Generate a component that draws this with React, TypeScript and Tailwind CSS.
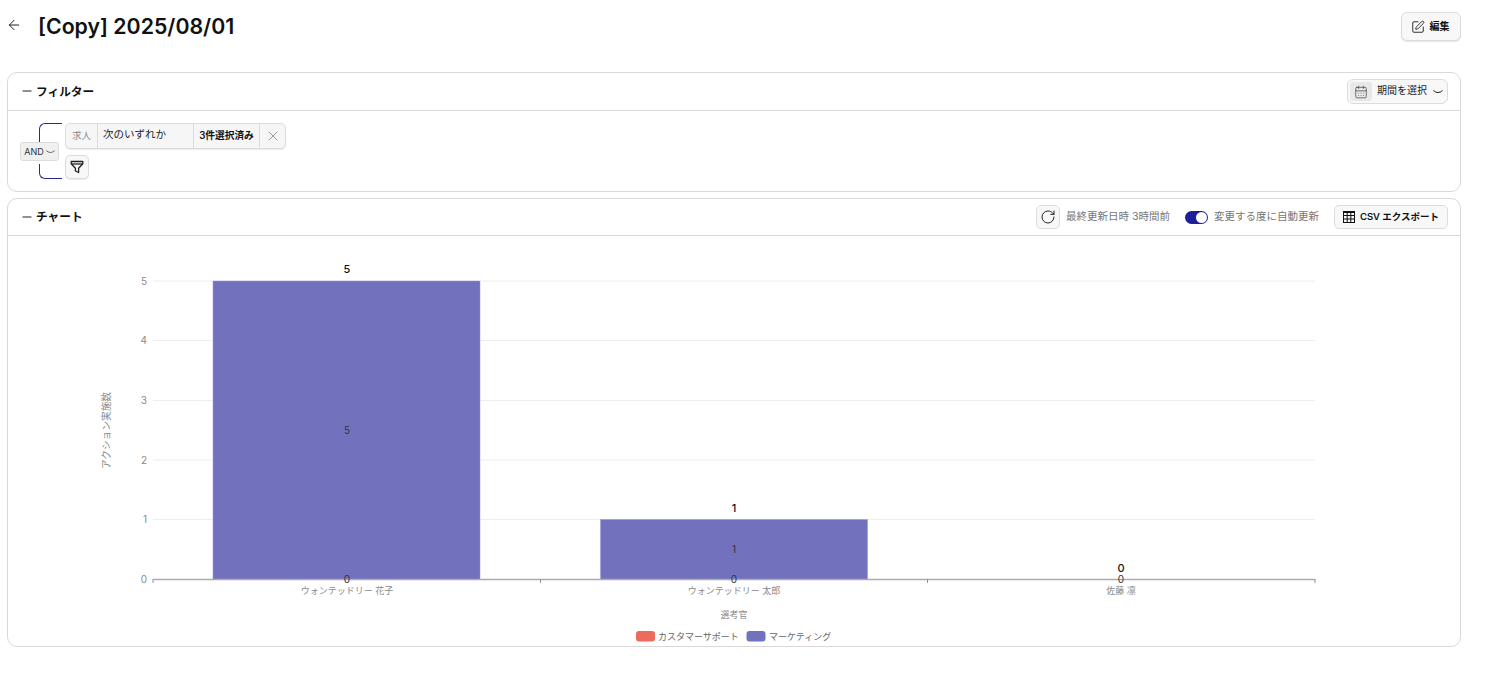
import { ArrowLeft, CalendarDays, Minus, RotateCw, SquarePen, X } from 'lucide-react';

const fontStack = "font-['Inter','Noto_Sans_CJK_JP',sans-serif]";
const svgFont = "Inter, 'Noto Sans CJK JP', sans-serif";

const grid = [
  { label: '5', y: 44 },
  { label: '4', y: 103.5 },
  { label: '3', y: 163.5 },
  { label: '2', y: 223 },
  { label: '1', y: 282.5 },
];

const bars = [
  { name: 'ウォンテッドリー 花子', x: 205, width: 267, y: 44, value: 5, cx: 339 },
  { name: 'ウォンテッドリー 太郎', x: 592.5, width: 267, y: 282.5, value: 1, cx: 726 },
  { name: '佐藤 凛', x: 0, width: 0, y: 342.5, value: 0, cx: 1113 },
];

function FlatChevron({ className }: { className: string }) {
  return (
    <svg viewBox="0 0 10 4" fill="none" stroke="currentColor" strokeWidth="1" strokeLinecap="round" className={className}>
      <path d="M0.7 0.8 Q5 4.6 9.3 0.8" />
    </svg>
  );
}

function FunnelIcon() {
  return (
    <svg viewBox="0 0 14 14" width="14" height="14" fill="none" stroke="#222" strokeWidth="1.3" strokeLinejoin="round">
      <path d="M1.2 1.5h11.6v2.2L8.6 8.2v4.3L5.4 11V8.2L1.2 3.7z" />
      <path d="M1.6 4h10.8" />
    </svg>
  );
}

function TableIcon() {
  return (
    <svg viewBox="0 0 12 12" width="12" height="12" fill="none" stroke="#111" strokeWidth="1">
      <rect x="0.5" y="0.5" width="11" height="11" />
      <path d="M0.5 1.5h11M0.5 4.5h11M0.5 8h11M4.2 0.5v11M7.8 0.5v11" />
    </svg>
  );
}

function Chart() {
  return (
    <svg width="1452" height="409" viewBox="0 0 1452 409" className="block" fontFamily={svgFont}>
      {grid.map((g) => (
        <g key={g.label}>
          <line x1="145" x2="1307" y1={g.y} y2={g.y} stroke="#eeeef3" strokeWidth="1" />
          <text x="139" y={g.y + 3.5} fontSize="10" fill="#8a8a8a" textAnchor="end">
            {g.label}
          </text>
        </g>
      ))}
      <text x="139" y="346" fontSize="10" fill="#8a8a8a" textAnchor="end">
        0
      </text>
      {bars.map((b) =>
        b.width > 0 ? (
          <rect key={b.name} x={b.x} y={b.y} width={b.width} height={342.5 - b.y} fill="#7271bd" stroke="#9796d6" strokeWidth="0.5" />
        ) : null,
      )}
      <line x1="145" x2="1307" y1="342.5" y2="342.5" stroke="#aaaab2" strokeWidth="1.5" />
      {[145, 532.5, 919.5, 1307].map((x) => (
        <line key={x} x1={x} x2={x} y1="342" y2="346" stroke="#8f8f98" strokeWidth="1" />
      ))}
      {bars.map((b) => (
        <g key={b.name} textAnchor="middle">
          <text x={b.cx} y={b.y - 8} fontSize="11" fontWeight="500" fill="#111">
            {b.value}
          </text>
          {b.value > 0 && (
            <text x={b.cx} y={(b.y + 342.5) / 2 + 3.5} fontSize="10" fill="#33333d">
              {b.value}
            </text>
          )}
          <text x={b.cx} y="346" fontSize="10" fill="#33333d">
            0
          </text>
          <text x={b.cx} y="357" fontSize="9" fill="#8a8a8a">
            {b.name}
          </text>
        </g>
      ))}
      <text x="726" y="381" fontSize="9" fill="#8a8a8a" textAnchor="middle">
        選考官
      </text>
      <text transform="translate(101.5 193.5) rotate(-90)" fontSize="9.7" fill="#8a8a8a" textAnchor="middle">
        アクション実施数
      </text>
      <rect x="628" y="394" width="19" height="10.5" rx="3" fill="#ee6a5b" />
      <text x="650" y="403" fontSize="9" fill="#666">
        カスタマーサポート
      </text>
      <rect x="738.5" y="394" width="19" height="10.5" rx="3" fill="#7271bd" />
      <text x="761" y="403" fontSize="9" fill="#666">
        マーケティング
      </text>
    </svg>
  );
}

function SectionTitle({ title }: { title: string }) {
  return (
    <div className="flex items-center gap-[5px]">
      <Minus className="-ml-[2px] h-[14px] w-[14px] text-black" strokeWidth={1.5} />
      <span className="-ml-[3px] translate-y-[1px] text-[11.7px] font-semibold text-[#111]">{title}</span>
    </div>
  );
}

export default function App() {
  return (
    <div className={`${fontStack} h-[675px] w-[1489px] overflow-hidden bg-white px-[7px] pt-[12px] text-[#111]`}>
      <div className="flex h-[60px] w-[1454px] items-start justify-between">
        <div className="flex items-center">
          <ArrowLeft className="-mt-[2px] -ml-[1px] h-[16px] w-[16px] text-[#222]" strokeWidth={1.5} />
          <h1 className="ml-[16px] text-[21.3px] leading-[28px] font-semibold">[Copy] 2025/08/01</h1>
        </div>
        <button className="flex h-[29px] w-[60px] items-center justify-center gap-[5px] rounded-[6px] border border-[#dcdcdc] bg-[#f8f8f8] pr-[2px] text-[10px] font-semibold shadow-[0_1px_1px_rgba(0,0,0,0.1)]">
          <SquarePen className="h-[14px] w-[14px] text-[#222]" strokeWidth={1.6} />
          編集
        </button>
      </div>

      <section className="h-[120px] w-[1454px] rounded-[10px] border border-[#d9d9d9]">
        <div className="flex h-[38px] items-center justify-between border-b border-[#d9d9d9] pr-[12px] pl-[14px]">
          <SectionTitle title="フィルター" />
          <button className="flex h-[25px] w-[101px] items-center rounded-[6px] border border-[#dcdcdc] bg-[#f8f8f8] pl-[2px] text-[10px] text-[#222]">
            <span className="flex h-[19px] w-[22px] items-center justify-center rounded-[3px] bg-[#e8e8e8]">
              <CalendarDays className="h-[14px] w-[14px] text-[#444]" strokeWidth={1.25} />
            </span>
            <span className="ml-[5px] -translate-y-[1px]">期間を選択</span>
            <FlatChevron className="ml-[6px] h-[4px] w-[10px] text-[#222]" />
          </button>
        </div>
        <div className="flex pt-[12px] pl-[12px]">
          <div className="relative h-[56px] w-[45px]">
            <div className="absolute top-0 left-[19px] h-[20px] w-[23px] rounded-tl-[6px] border-t border-l border-[#2a2a8c]" />
            <div className="absolute bottom-0 left-[19px] h-[15px] w-[23px] rounded-bl-[6px] border-b border-l border-[#2a2a8c]" />
            <div className="absolute top-[19px] left-0 flex h-[19px] w-[39px] items-center justify-center gap-[2px] rounded-[3px] border border-[#dcdcdc] bg-[#f0f0f0] text-[9px] text-[#333]">
              AND
              <FlatChevron className="h-[4px] w-[9px] text-[#555]" />
            </div>
          </div>
          <div className="flex flex-col gap-[6px]">
            <div className="flex h-[26px] w-[221px] items-stretch rounded-[5px] border border-[#dcdcdc] bg-[#f6f6f6] text-[10px] shadow-[0_1px_1px_rgba(0,0,0,0.08)]">
              <div className="flex w-[32px] items-center justify-center border-r border-[#dcdcdc] text-[9.5px] text-[#8a8a8a]">求人</div>
              <div className="w-[96px] border-r border-[#dcdcdc] pt-[3px] pl-[5px] text-[10.5px] text-[#222]">次のいずれか</div>
              <div className="flex w-[66px] -translate-y-[0.5px] items-center justify-center border-r border-[#dcdcdc] text-[9.7px] font-semibold">3件選択済み</div>
              <div className="flex flex-1 items-center justify-center">
                <X className="h-[16px] w-[16px] text-[#777]" strokeWidth={1.1} />
              </div>
            </div>
            <button className="flex h-[24px] w-[24px] items-center justify-center rounded-[5px] border border-[#dcdcdc] bg-[#f8f8f8] shadow-[0_1px_1px_rgba(0,0,0,0.08)]">
              <FunnelIcon />
            </button>
          </div>
        </div>
      </section>

      <section className="mt-[6px] h-[449px] w-[1454px] overflow-hidden rounded-[10px] border border-[#d9d9d9]">
        <div className="flex h-[37px] items-center justify-between border-b border-[#d9d9d9] pr-[12px] pl-[14px]">
          <SectionTitle title="チャート" />
          <div className="flex items-center text-[10.5px] text-[#777]">
            <button className="flex h-[24px] w-[24px] items-center justify-center rounded-[5px] border border-[#dcdcdc] bg-[#f8f8f8]">
              <RotateCw className="h-[16px] w-[16px] text-[#222]" strokeWidth={1.5} />
            </button>
            <span className="ml-[6px]">最終更新日時 3時間前</span>
            <span className="ml-[15px] flex h-[13px] w-[23px] items-center justify-end rounded-full bg-[#1f1f96] pr-[1px]">
              <span className="h-[11px] w-[11px] rounded-full bg-white" />
            </span>
            <span className="ml-[6px]">変更する度に自動更新</span>
            <button className="ml-[15px] flex h-[24px] w-[114px] items-center justify-center gap-[5px] rounded-[5px] border border-[#dcdcdc] bg-[#f8f8f8] text-[9.5px] font-semibold text-[#111]">
              <TableIcon />
              CSV エクスポート
            </button>
          </div>
        </div>
        <div className="pt-[1px]">
          <Chart />
        </div>
      </section>
    </div>
  );
}
